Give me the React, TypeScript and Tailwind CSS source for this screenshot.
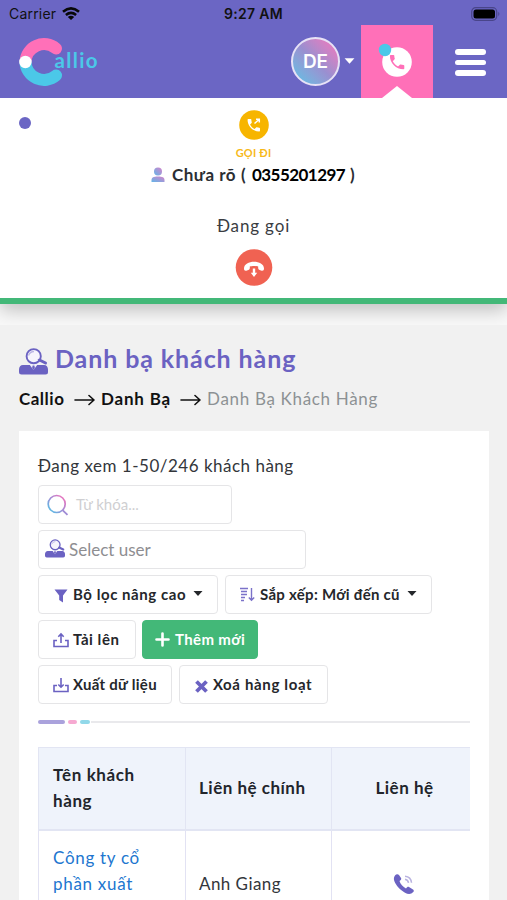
import type { ReactNode } from "react";

function ContactIcon({ className }: { className: string }) {
  return (
    <svg viewBox="0 0 29 27" className={className} fill="none">
      <path d="M4 17h21c2.500 0 4 2 4 4.500V24a2.500 2.500 0 0 1-2.500 2.500h-24A2.500 2.500 0 0 1 0 24v-2.500C0 19 1.500 17 4 17z" fill="#6b62c2" />
      <path d="M10.500 16.500h8L14.500 22z" fill="#f4f2fb" />
      <path d="M13.600 17.500h1.800l.500 2.500-1.400 2-1.400-2z" fill="#6b62c2" />
      <circle cx="14.700" cy="8.200" r="7.100" fill="#f6f4fc" stroke="#6b62c2" strokeWidth="1.900" />
      <path d="M9.500 7.500Q11 3.500 15 3.500" stroke="#bcb7e4" strokeWidth="1.300" />
      <path d="M20.500 12l6 3" stroke="#6b62c2" strokeWidth="3" strokeLinecap="round" />
    </svg>
  );
}

const handset =
  "M6.620 10.790c1.440 2.830 3.760 5.140 6.590 6.590l2.200-2.200c.270-.270.670-.360 1.020-.240 1.120.370 2.330.570 3.570.570.550 0 1 .450 1 1V20c0 .550-.450 1-1 1-9.390 0-17-7.610-17-17 0-.550.450-1 1-1h3.500c.550 0 1 .450 1 1 0 1.250.200 2.450.570 3.570.110.350.030.740-.250 1.020l-2.200 2.200z";

function Caret({ className }: { className: string }) {
  return (
    <svg viewBox="0 0 10 5" className={className}>
      <path d="M.500 0h9L5 5z" fill="currentColor" />
    </svg>
  );
}

function TrayIcon({ up }: { up: boolean }) {
  return (
    <svg viewBox="0 0 16 16" className="h-4 w-4 shrink-0" fill="none" stroke="#6b62c2" strokeWidth="1.600">
      <path d="M4 8.500H1v6h14v-6h-3" />
      {up ? <path d="M8 11V2.500M5.300 4.700 8 2l2.700 2.700" /> : <path d="M8 1v9M5.300 7.500 8 10.200l2.700-2.700" />}
    </svg>
  );
}

function Button({ className, children }: { className: string; children: ReactNode }) {
  return (
    <button className={`flex h-[39px] items-center rounded-[4px] border text-[15px] font-bold whitespace-nowrap ${className}`}>
      {children}
    </button>
  );
}

function LongArrow() {
  return (
    <svg viewBox="0 0 21 12" className="mt-[2px] h-3 w-[21px] shrink-0" fill="none" stroke="#111" strokeWidth="1.600" strokeLinecap="round" strokeLinejoin="round">
      <path d="M1 6h19M15 1.500 20 6l-5 4.500" />
    </svg>
  );
}

function Header() {
  return (
    <header className="h-[98px] bg-[#6b66c4]">
      <div className="grid h-[25px] grid-cols-3 items-center pt-[2px] font-['Inter','Liberation_Sans',sans-serif] text-[14px] text-[#111]">
        <div className="flex items-center gap-[6px] pl-[9px]">
          <span className="tracking-[0.200px]">Carrier</span>
          <svg viewBox="0 0 18 13" className="mb-[1px] h-[13px] w-[18px]" fill="none" stroke="#080808" strokeWidth="2.600">
            <path d="M1 4.700Q9-2 17 4.700M3.900 7.900Q9 3.700 14.100 7.900" />
            <path d="M9 13 5.800 9.900Q9 7.400 12.200 9.900z" fill="#080808" stroke="none" />
          </svg>
        </div>
        <span className="text-center font-semibold tracking-[0.300px]">9:27 AM</span>
        <div className="flex justify-end pr-[6px]">
          <svg viewBox="0 0 30 14" className="h-[14px] w-[30px]">
            <rect x=".700" y=".700" width="25" height="12.600" rx="4" fill="none" stroke="#49458a" strokeWidth="1.200" />
            <rect x="2.500" y="2.500" width="21.500" height="9" rx="2.500" fill="#000" />
            <path d="M27.300 4.800q2.200 2.200 0 4.400z" fill="#49458a" />
          </svg>
        </div>
      </div>
      <div className="flex h-[73px] items-center">
        <div className="flex flex-1 items-center pl-[19px]">
          <svg viewBox="0 0 80 50" className="h-[50px] w-[80px]" fill="none" strokeWidth="12" strokeLinecap="round">
            <path d="M37 11.500A18.500 18.500 0 0 0 6.500 25" stroke="#ff70b8" />
            <path d="M37 38.500A18.500 18.500 0 0 1 6.500 25" stroke="#4bc8e8" />
            <circle cx="6.400" cy="25" r="6.200" fill="#fff" />
            <text x="35.500" y="31" textLength="43" fill="#4bc8e8" fontFamily="Lato, sans-serif" fontSize="20.500" fontWeight="700">allio</text>
          </svg>
        </div>
        <div className="flex h-[49px] w-[49px] items-center justify-center rounded-full border-2 border-[#e7e2f6] bg-linear-to-tr from-[#4fc4e6] via-[#9a8fd0] to-[#f573bb] pt-[2px] font-['Inter',sans-serif] text-[19px] font-semibold text-white">DE</div>
        <Caret className="mr-[6px] mb-[2px] ml-[4px] h-[6px] w-[11px] text-white" />
        <svg viewBox="0 0 72 73" className="h-[73px] w-[72px]">
          <rect width="72" height="73" fill="#ff70b8" />
          <circle cx="36" cy="37" r="14.800" fill="#fff" />
          <g transform="translate(26.500 27.500) scale(.800)"><path d={handset} fill="#ff70b8" /></g>
          <circle cx="24" cy="25" r="6.200" fill="#4bc8e8" />
          <path d="M21 73 36 61l15 12z" fill="#fff" />
        </svg>
        <div className="mt-[2px] mr-[21px] ml-[22px] flex w-[31px] flex-col gap-[5px]">
          <i className="h-[5.500px] rounded-full bg-white" />
          <i className="h-[5.500px] rounded-full bg-white" />
          <i className="h-[5.500px] rounded-full bg-white" />
        </div>
      </div>
    </header>
  );
}

function CallPanel() {
  return (
    <section className="relative flex h-[206px] flex-col items-center border-b-[6px] border-[#43b878] bg-white pt-[12px] shadow-[0_6px_18px_rgba(0,0,0,0.240)]">
      <i className="absolute top-[19px] left-[19px] h-[12px] w-[12px] rounded-full bg-[#6b66c4]" />
      <svg viewBox="0 0 30 30" className="h-[30px] w-[30px] shrink-0">
        <circle cx="15" cy="15" r="14.800" fill="#f7b500" />
        <g transform="translate(6.500 7) scale(.690)"><path d={handset} fill="#fff" /></g>
        <path d="m15.500 13.500 4.500-4M17 9.300h3.300v3.300" fill="none" stroke="#fff" strokeWidth="1.500" />
      </svg>
      <div className="mt-[5px] h-[16px] text-[11px] leading-[16px] font-bold tracking-[0.200px] text-[#f7b91a]">GỌI ĐI</div>
      <div className="mt-[1px] flex h-[26px] w-[205px] items-center text-[17px] font-bold text-[#2b2e33]">
        <svg viewBox="0 0 14 16" className="mr-[7px] mb-[1px] h-[16px] w-[14px] shrink-0">
          <defs>
            <linearGradient id="person" x1="0" y1="1" x2="1" y2="0"><stop stopColor="#62b5e8" /><stop offset="1" stopColor="#d582ca" /></linearGradient>
          </defs>
          <circle cx="7" cy="4.500" r="4" fill="url(#person)" />
          <path d="M.500 15v-2C.500 10.500 2.500 9.500 7 9.500s6.500 1 6.500 3.500v2z" fill="url(#person)" />
        </svg>
        <span className="w-[69px] tracking-[0.500px] whitespace-nowrap">Chưa rõ</span>
        <span className="w-[11px]">(</span>
        <span className="w-[98px] tracking-[-0.550px] text-black">0355201297</span>
        <span>)</span>
      </div>
      <div className="mt-[25px] h-[26px] text-[17px] leading-[26px] tracking-[0.850px] text-[#3a3d42]">Đang gọi</div>
      <svg viewBox="0 0 38 38" className="mt-[10px] h-[38px] w-[38px] shrink-0">
        <circle cx="19" cy="18.500" r="18.300" fill="#f06252" />
        <path d="M9 19.500c0-9 20-9 20 0 0 2-1 2.500-3 2-2.500-.500-3-1-2.800-4-2-.700-6.400-.700-8.400 0 .200 3-.300 3.500-2.800 4-2 .500-3 0-3-2z" fill="#fff" />
        <path d="M17.800 19.500h2.400v4.200h2L19 28l-3.200-4.300h2z" fill="#fff" />
      </svg>
    </section>
  );
}

function CustomerTable() {
  return (
    <table className="mt-[23px] w-[432px] table-fixed border-collapse text-[17px] leading-[26px] text-[#33363b]">
      <colgroup>
        <col className="w-[147px]" />
        <col className="w-[146px]" />
        <col />
      </colgroup>
      <thead className="bg-[#eff3fb] text-[#22252b]">
        <tr className="h-[82px]">
          <th className="border border-b-2 border-[#e2e5f3] px-[14px] text-left tracking-[0.600px]">Tên khách<br />hàng</th>
          <th className="border border-b-2 border-[#e2e5f3] px-[13px] text-left tracking-[0.500px] whitespace-nowrap">Liên hệ chính</th>
          <th className="border border-r-0 border-b-2 border-[#e2e5f3] pl-[7px] tracking-[0.500px] whitespace-nowrap">Liên hệ</th>
        </tr>
      </thead>
      <tbody>
        <tr className="h-[108px]">
          <td className="border border-[#e2e2f3] px-[14px] tracking-[0.700px] text-[#2176cf]">Công ty cổ<br />phần xuất<br />&nbsp;</td>
          <td className="border border-[#e2e2f3] px-[13px] tracking-[0.450px]">Anh Giang</td>
          <td className="border border-r-0 border-[#e2e2f3] pl-[5px]">
            <svg viewBox="0 0 22 22" className="mx-auto h-[22px] w-[22px]">
              <path d="M2 2.500C3 1 5 .800 6 2l2 3c.700 1.200 0 2-1.500 3 .800 3 3.500 6 6.500 7.500 1-1.500 2-2 3-1.500l4 2.500c1 .700 1 1.800.300 2.600-2.300 2.400-5.300 2.200-8.300.600C7 17 3 12.500 1.300 8 .600 6 .800 4 2 2.500z" fill="#6b62c2" />
              <path d="M12 3.200q6 .500 6.500 6.500M12 6.300q3 .500 3.500 3.500" fill="none" stroke="#b9b3e0" strokeWidth="1.500" />
            </svg>
          </td>
        </tr>
      </tbody>
    </table>
  );
}

export default function App() {
  return (
    <div className="h-[900px] w-[507px] overflow-hidden bg-[#f1f1f1] font-['Lato','Noto_Sans',sans-serif]">
      <Header />
      <div className="h-[227px] overflow-hidden bg-[#f9f9f9]">
        <CallPanel />
      </div>
      <main className="px-[19px] pt-[19px]">
        <h1 className="flex h-[30px] items-center text-[25px] font-bold tracking-[0.900px] whitespace-nowrap text-[#6b62c2]">
          <ContactIcon className="mt-[4px] mr-[7px] h-[27px] w-[29px]" />
          <span>Danh bạ khách hàng</span>
        </h1>
        <nav className="mt-[13px] flex h-[24px] items-center text-[17px] font-bold whitespace-nowrap text-[#111]">
          <span className="w-[55px] tracking-[0.500px]">Callio</span>
          <LongArrow />
          <span className="ml-[6px] w-[79px] tracking-[0.800px]">Danh Bạ</span>
          <LongArrow />
          <span className="ml-[6px] font-normal tracking-[0.680px] text-[#8d9194]">Danh Bạ Khách Hàng</span>
        </nav>
        <section className="mt-[20px] h-[490px] w-[470px] bg-white px-[19px] pt-[22px]">
          <p className="h-[26px] text-[17px] leading-[26px] tracking-[0.500px] whitespace-nowrap text-[#33363b]">Đang xem 1-50/246 khách hàng</p>
          <div className="mt-[6px] flex h-[39px] w-[194px] items-center rounded-[4px] border border-[#e5e5e7] pl-[8px] text-[15px] text-[#cfcfd2]">
            <svg viewBox="0 0 22 22" className="mr-[7px] h-[22px] w-[22px]" fill="none">
              <defs>
                <linearGradient id="lens" x1="0" y1="1" x2="1" y2="0"><stop stopColor="#4bc8e8" /><stop offset=".500" stopColor="#a08bd5" /><stop offset="1" stopColor="#ff70b8" /></linearGradient>
              </defs>
              <circle cx="9.700" cy="10" r="8.500" stroke="url(#lens)" strokeWidth="1.700" />
              <path d="m15.800 16.300 4.700 4.500" stroke="#a08bd5" strokeWidth="1.800" />
            </svg>
            <span>Từ khóa...</span>
          </div>
          <div className="mt-[6px] flex h-[39px] w-[268px] items-center rounded-[4px] border border-[#e5e5e7] pl-[6px] text-[17px] text-[#8e8e91]">
            <ContactIcon className="mr-[4px] mb-[3px] h-[19px] w-[20px]" />
            <span>Select user</span>
          </div>
          <div className="mt-[6px] flex flex-col gap-[6px] text-[#25272b]">
            <div className="flex gap-[7px]">
              <Button className="w-[180px] border-[#e5e5e7] pl-[15px]">
                <svg viewBox="0 0 14 14" className="mt-[2px] mr-[5px] h-[14px] w-[14px]"><path d="M.500.500h13L9 6.500v7L5.200 11V6.500z" fill="#6b62c2" /></svg>
                <span className="tracking-[0.550px]">Bộ lọc nâng cao</span>
                <Caret className="mr-[14px] mb-[3px] ml-auto h-[5px] w-[10px]" />
              </Button>
              <Button className="w-[207px] border-[#e5e5e7] pl-[14px]">
                <svg viewBox="0 0 15 15" className="mr-[5px] h-[15px] w-[15px]" fill="none" stroke="#7b72c9" strokeWidth="1.400"><path d="M0 1.500h8M1 4.500h6M1 7.500h6M1 10.500h4M1 13.500h3M11.500 1v12M8.800 10.500l2.700 2.700 2.700-2.700" /></svg>
                <span className="tracking-[0.280px]">Sắp xếp: Mới đến cũ</span>
                <Caret className="mr-[14px] mb-[3px] ml-auto h-[5px] w-[10px]" />
              </Button>
            </div>
            <div className="flex gap-[6px]">
              <Button className="w-[98px] gap-[4px] border-[#e5e5e7] pl-[14px] tracking-[0.550px]"><TrayIcon up /><span>Tải lên</span></Button>
              <Button className="w-[116px] gap-[5px] border-[#43b878] bg-[#43b878] pl-[12px] tracking-[0.350px] text-white">
                <svg viewBox="0 0 15 15" className="h-[15px] w-[15px]" stroke="#fff" strokeWidth="2.600" strokeLinecap="round"><path d="M7.500 1.500v12M1.500 7.500h12" /></svg>
                <span>Thêm mới</span>
              </Button>
            </div>
            <div className="flex gap-[7px]">
              <Button className="w-[134px] gap-[4px] border-[#e5e5e7] pl-[14px] tracking-[0.300px]"><TrayIcon up={false} /><span>Xuất dữ liệu</span></Button>
              <Button className="w-[149px] gap-[5px] border-[#e5e5e7] pl-[15px] tracking-[0.650px]">
                <svg viewBox="0 0 13 13" className="mt-[3px] h-[13px] w-[13px]" stroke="#6b62c2" strokeWidth="3.800"><path d="m1.500 1.500 10 10M11.500 1.500l-10 10" /></svg>
                <span>Xoá hàng loạt</span>
              </Button>
            </div>
          </div>
          <div className="mt-[16px] flex h-[4px] w-[432px] items-center gap-[3px]">
            <i className="h-[4px] w-[27px] rounded-full bg-[#aaa2dc]" />
            <i className="h-[4px] w-[9px] rounded-full bg-[#f6a9d1]" />
            <i className="h-[4px] w-[10px] rounded-full bg-[#91d8e9]" />
            <i className="-ml-[2px] h-[2px] flex-1 bg-[#e9e9ec]" />
          </div>
          <CustomerTable />
        </section>
      </main>
    </div>
  );
}
